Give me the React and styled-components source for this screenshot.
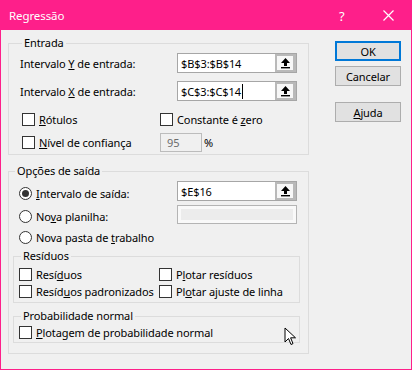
import React from 'react';
import styled, { createGlobalStyle } from 'styled-components';

const Global = createGlobalStyle`
  html, body {
    margin: 0;
    padding: 0;
    background: #ffffff;
  }
  body {
    font-family: "Noto Sans", "Liberation Sans", sans-serif;
    font-size: 11px;
    letter-spacing: -0.1px;
    color: #000;
  }
`

const Window = styled.div`
  position: relative;
  width: 412px;
  height: 370px;
  box-sizing: border-box;
  border: 1px solid #fe1f8a;
  background: #f0f0f0;
  display: flex;
  flex-direction: column;
`

const TitleBar = styled.div`
  height: 29px;
  background: #fe1f8a;
  color: #fff;
  display: flex;
  align-items: center;
  padding-left: 8px;
  font-size: 11.5px;
`

const Title = styled.div`
  flex: 1;
  margin-top: -1px;
`

const Help = styled.div`
  width: 20px;
  margin-right: 24px;
  font-size: 13px;
`

const Close = styled.div`
  width: 28px;
  display: flex;
  align-items: center;
`

const Body = styled.div`
  flex: 1;
  display: flex;
  padding: 5px 0 0 7px;
`

const Left = styled.div`
  width: 301px;
  display: flex;
  flex-direction: column;
`

const Group = styled.fieldset`
  margin: ${p => p.$mt || 0}px 0 0 0;
  padding: ${p => p.$pad};
  border: 1px solid #dcdcdc;
  min-width: 0;
  width: ${p => p.$w || 301}px;
  box-sizing: border-box;

  legend {
    padding: 0 2px;
    margin-left: 2px;
    line-height: 16px;
  }
`

const Row = styled.div`
  display: flex;
  align-items: ${p => p.$align || 'center'};
  height: ${p => p.$h}px;
  margin-top: ${p => p.$mt || 0}px;
  padding-left: ${p => p.$pl || 0}px;
`

const FieldLabel = styled.div`
  width: 157px;
`

const RangeBox = styled.div`
  width: 120px;
  height: ${p => p.$h || 20}px;
  box-sizing: border-box;
  border: 1px solid #a6a6a6;
  background: #fff;
  display: flex;
  align-items: center;
`

const RangeText = styled.div`
  flex: 1;
  padding-left: 3px;
  display: flex;
  align-items: center;
`

const Caret = styled.span`
  display: inline-block;
  width: 1px;
  height: 15px;
  background: #000;
  margin-left: 1px;
`

const PickButton = styled.div`
  width: 21px;
  height: 18px;
  box-sizing: border-box;
  border: 2px solid #b9b9b9;
  border-right-width: 3px;
  background: #f7f7f7;
  display: flex;
  align-items: center;
  justify-content: center;
`

const DisabledBox = styled.div`
  width: 120px;
  height: 19px;
  box-sizing: border-box;
  border: 1px solid #b4b4b4;
  background: #ececec;
  box-shadow: inset 0 0 0 3px #f9f9f9;
`

const Check = styled.span`
  display: inline-block;
  width: 13px;
  height: 13px;
  box-sizing: border-box;
  border: 1px solid #333;
  background: #fff;
  margin-right: 4px;
  flex: none;
`

const Radio = styled.span`
  display: inline-flex;
  align-items: center;
  justify-content: center;
  width: 13px;
  height: 13px;
  box-sizing: border-box;
  border: 1px solid #333;
  border-radius: 50%;
  background: #fff;
  margin-right: 4px;
  flex: none;

  &::after {
    content: '';
    display: ${p => (p.$on ? 'block' : 'none')};
    width: 7px;
    height: 7px;
    border-radius: 50%;
    background: #333;
  }
`

const Option = styled.div`
  display: flex;
  align-items: center;
  width: ${p => (p.$w ? p.$w + 'px' : 'auto')};
  margin-top: ${p => p.$mt || 0}px;
  flex: none;
  white-space: nowrap;
`

const Pct = styled.div`
  width: 42px;
  height: 19px;
  box-sizing: border-box;
  border: 1px solid #bcbcbc;
  background: #f0f0f0;
  color: #6d6d6d;
  padding-left: 6px;
  line-height: 17px;
  margin-right: 2px;
`

const Buttons = styled.div`
  display: flex;
  flex-direction: column;
  padding: 6px 0 0 26px;
`

const Button = styled.div`
  width: 66px;
  height: 20px;
  box-sizing: border-box;
  border: ${p => (p.$primary ? '2px solid #0078d7' : '1px solid #adadad')};
  background: #e1e1e1;
  display: flex;
  align-items: center;
  justify-content: center;
  margin-top: ${p => p.$mt || 0}px;
`

const Cursor = styled.svg`
  position: absolute;
  left: 283px;
  top: 326px;
`

const u = s => <u>{s}</u>

const UpArrow = () => (
  <svg width="11" height="12" viewBox="0 0 11 12">
    <path d="M5.5 1 L10 6 L7 6 L7 9 L4 9 L4 6 L1 6 Z" fill="#000" />
    <rect x="1" y="10" width="9" height="1.4" fill="#000" />
  </svg>
)

const App = () => {
  return (
    <>
      <Global />
      <Window>
        <TitleBar>
          <Title>Regressão</Title>
          <Help>?</Help>
          <Close>
            <svg width="11" height="11" viewBox="0 0 11 11">
              <path d="M0.5 0.5 L10.5 10.5 M10.5 0.5 L0.5 10.5" stroke="#fff" strokeWidth="1.2" />
            </svg>
          </Close>
        </TitleBar>
        <Body>
          <Left>
            <Group $pad="2px 10px 2px 11px">
              <legend>Entrada</legend>
              <Row $h={20}>
                <FieldLabel>Intervalo {u('Y')} de entrada:</FieldLabel>
                <RangeBox>
                  <RangeText>$B$3:$B$14</RangeText>
                  <PickButton><UpArrow /></PickButton>
                </RangeBox>
              </Row>
              <Row $h={20} $mt={8}>
                <FieldLabel>Intervalo {u('X')} de entrada:</FieldLabel>
                <RangeBox>
                  <RangeText><span>$C$3:$C$14</span><Caret /></RangeText>
                  <PickButton><UpArrow /></PickButton>
                </RangeBox>
              </Row>
              <Row $h={17} $mt={10} $pl={2}>
                <Option $w={138}><Check /><span>{u('R')}ótulos</span></Option>
                <Option><Check /><span>Constante é {u('z')}ero</span></Option>
              </Row>
              <Row $h={19} $mt={5} $pl={2}>
                <Option $w={138}><Check /><span>{u('N')}ível de confiança</span></Option>
                <Pct>95</Pct>
                <span>%</span>
              </Row>
            </Group>

            <Group $mt={8} $pad="2px 9px 10px 4px">
              <legend>Opções de saída</legend>
              <Row $h={21} $align="flex-start" $pl={6}>
                <Option $w={158} $mt={5}><Radio $on /><span>{u('I')}ntervalo de saída:</span></Option>
                <RangeBox>
                  <RangeText>$E$16</RangeText>
                  <PickButton><UpArrow /></PickButton>
                </RangeBox>
              </Row>
              <Row $h={20} $mt={3} $align="flex-start" $pl={6}>
                <Option $w={158} $mt={4}><Radio /><span>No{u('v')}a planilha:</span></Option>
                <DisabledBox />
              </Row>
              <Row $h={16} $mt={4} $pl={6}>
                <Option><Radio /><span>Nova pasta de {u('t')}rabalho</span></Option>
              </Row>

              <Group $mt={3} $w={287} $pad="2px 4px 2px 5px">
                <legend>Resíduos</legend>
                <Row $h={17}>
                  <Option $w={140}><Check /><span>Resí{u('d')}uos</span></Option>
                  <Option><Check /><span>P{u('l')}otar resíduos</span></Option>
                </Row>
                <Row $h={17}>
                  <Option $w={140}><Check /><span>Resíd{u('u')}os padronizados</span></Option>
                  <Option><Check /><span>Pl{u('o')}tar ajuste de linha</span></Option>
                </Row>
              </Group>

              <Group $mt={5} $w={287} $pad="0 4px 1px 5px">
                <legend>Probabilidade normal</legend>
                <Row $h={17}>
                  <Option><Check /><span>{u('P')}lotagem de probabilidade normal</span></Option>
                </Row>
              </Group>
            </Group>
          </Left>

          <Buttons>
            <Button $primary>OK</Button>
            <Button $mt={5}>Cancelar</Button>
            <Button $mt={16}>{u('A')}juda</Button>
          </Buttons>
        </Body>

        <Cursor width="13" height="20" viewBox="0 0 13 20">
          <path d="M1 1 L1 15 L4.5 11.5 L7 17.5 L9 16.6 L6.6 10.8 L11.5 10.8 Z" fill="#fff" stroke="#000" strokeWidth="1" strokeLinejoin="round" />
        </Cursor>
      </Window>
    </>
  );
};

export default App;
